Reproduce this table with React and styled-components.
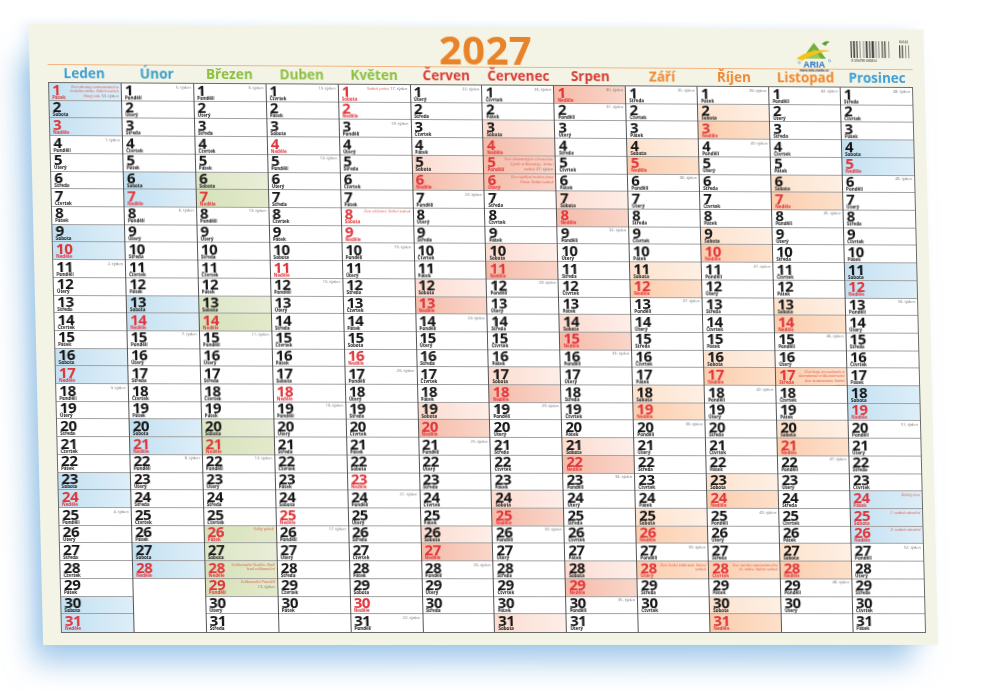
import React from 'react';
import styled, { createGlobalStyle } from 'styled-components';

const YEAR = 2027;
const DAY_NAMES = ['Neděle', 'Pondělí', 'Úterý', 'Středa', 'Čtvrtek', 'Pátek', 'Sobota'];

const PALETTES = {
  blue: { sat: 'linear-gradient(90deg,#c4e1f2,#ddeef8)', sun: 'linear-gradient(90deg,#c4e1f2,#ddeef8)' },
  green: { sat: 'linear-gradient(90deg,#dde6c6,#e9eed8)', sun: 'linear-gradient(90deg,#d6e1ba,#e3eacb)' },
  red: { sat: 'linear-gradient(90deg,#fcdcd0,#fdeee8)', sun: 'linear-gradient(90deg,#f5bba8,#f9d6ca)' },
  orange: { sat: 'linear-gradient(90deg,#fde2cd,#fef0e4)', sun: 'linear-gradient(90deg,#fbcdad,#fde0ca)' },
  none: { sat: null, sun: null },
};

const MONTHS = [
  ['Leden', '#3d9fd6', 'blue'],
  ['Únor', '#3a9fc9', 'blue'],
  ['Březen', '#8cbf3f', 'green'],
  ['Duben', '#8cbf3f', 'none'],
  ['Květen', '#8cbf3f', 'none'],
  ['Červen', '#d93a35', 'red'],
  ['Červenec', '#d93a35', 'red'],
  ['Srpen', '#d93a35', 'red'],
  ['Září', '#f0872e', 'orange'],
  ['Říjen', '#f0872e', 'orange'],
  ['Listopad', '#f0872e', 'orange'],
  ['Prosinec', '#3d9fd6', 'blue'],
];

const HOLIDAYS = {
  '0-1': 'Den obnovy samostatného českého státu, Státní svátek Nový rok,',
  '2-26': 'Velký pátek',
  '2-28': 'Velikonoční Neděle, Boží hod velikonoční',
  '2-29': 'Velikonoční Pondělí',
  '4-1': 'Svátek práce',
  '4-8': 'Den vítězství, Státní svátek',
  '6-5': 'Den slovanských věrozvěstů Cyrila a Metoděje, Státní svátek',
  '6-6': 'Den upálení mistra Jana Husa, Státní svátek',
  '8-28': 'Den české státnosti, Státní svátek',
  '9-28': 'Den vzniku samostatného čs. státu, Státní svátek',
  '10-17': 'Den boje za svobodu a demokracii a Mezinárodní den studentstva, Státní svátek',
  '11-24': 'Štědrý den',
  '11-25': '1. svátek vánoční',
  '11-26': '2. svátek vánoční',
};

function isoWeek(m, d) {
  const t = new Date(Date.UTC(YEAR, m, d));
  const dayNum = t.getUTCDay() || 7;
  t.setUTCDate(t.getUTCDate() + 4 - dayNum);
  const start = new Date(Date.UTC(t.getUTCFullYear(), 0, 1));
  return Math.ceil(((t - start) / 86400000 + 1) / 7);
}

const months = MONTHS.map(([name, color, palette], mi) => {
  const count = new Date(YEAR, mi + 1, 0).getDate();
  const days = [];
  for (let d = 1; d <= count; d++) {
    const dow = new Date(YEAR, mi, d).getDay();
    const note = HOLIDAYS[`${mi}-${d}`];
    const kind = dow === 0 || note ? 'sun' : dow === 6 ? 'sat' : null;
    days.push({
      d,
      name: DAY_NAMES[dow],
      red: dow === 0 || !!note,
      bg: kind ? PALETTES[palette][kind] : null,
      note,
      week: dow === 1 || d === 1 ? isoWeek(mi, d) : null,
    });
  }
  return { name, color, days, rest: 31 - count };
});

// the poster is photographed a little askew: map the flat grid onto the measured corners
function solve(A, b) {
  const n = b.length;
  const M = A.map((row, i) => [...row, b[i]]);
  for (let c = 0; c < n; c++) {
    let p = c;
    for (let r = c + 1; r < n; r++) if (Math.abs(M[r][c]) > Math.abs(M[p][c])) p = r;
    [M[c], M[p]] = [M[p], M[c]];
    for (let r = 0; r < n; r++) {
      if (r === c) continue;
      const f = M[r][c] / M[c][c];
      for (let k = c; k <= n; k++) M[r][k] -= f * M[c][k];
    }
  }
  return M.map((row, i) => row[n] / row[i]);
}

function warp(src, dst) {
  const A = [];
  const b = [];
  src.forEach(([x, y], i) => {
    const [u, v] = dst[i];
    A.push([x, y, 1, 0, 0, 0, -x * u, -y * u]);
    b.push(u);
    A.push([0, 0, 0, x, y, 1, -x * v, -y * v]);
    b.push(v);
  });
  const [a, bb, c, d, e, f, g, h] = solve(A, b);
  return `matrix3d(${[a, d, 0, g, bb, e, 0, h, 0, 0, 1, 0, c, f, 0, 1].join(',')})`;
}

const GX = 18;
const GY = 58;
const GW = 865;
const GH = 551;

const SHEET_WARP = warp(
  [[GX, GY], [GX + GW, GY], [GX, GY + GH], [GX + GW, GY + GH]],
  [[18, 58], [883, 63], [31, 609], [896, 609]]
);

const GlobalStyle = createGlobalStyle`
  html, body { margin: 0; padding: 0; background: #fff; }
  body {
    width: 999px;
    height: 691px;
    overflow: hidden;
    font-family: "Open Sans", "Noto Sans", sans-serif;
  }
`;

const Page = styled.div`
  width: 999px;
  height: 691px;
  padding: 24px 0 0 30px;
  box-sizing: border-box;
  overflow: hidden;
`;

const Sheet = styled.div`
  width: ${GX + GW + 12}px;
  box-sizing: border-box;
  padding: 6px 12px 12px ${GX}px;
  background: #f4f4e6;
  transform: ${SHEET_WARP};
  transform-origin: 0 0;
  box-shadow: -18px 26px 26px -8px rgba(110, 170, 222, 0.6), -6px 0 12px -2px rgba(150, 195, 230, 0.35);
`;

const TitleRow = styled.div`
  height: 34px;
  display: grid;
  grid-template-columns: 1fr auto 1fr;
  align-items: end;
`;

const Year = styled.div`
  grid-column: 2;
  font-size: 40px;
  line-height: 34px;
  font-weight: 700;
  color: #e98329;
  letter-spacing: 0.5px;
  margin: 0 0 5px 8px;
`;

const Brand = styled.div`
  grid-column: 3;
  justify-self: end;
  align-self: start;
  display: flex;
  align-items: flex-start;
  gap: 14px;
  margin-top: 4px;
`;

const MonthNames = styled.div`
  display: grid;
  grid-template-columns: repeat(12, 1fr);
  height: 18px;
  border-top: 1.5px solid #f2b47f;
  box-sizing: border-box;
`;

const MonthName = styled.div`
  text-align: center;
  font-size: 13.5px;
  line-height: 17px;
  font-weight: 700;
  color: ${(p) => p.$color};
`;

const Grid = styled.div`
  display: grid;
  grid-template-columns: repeat(12, minmax(0, 1fr));
  height: ${GH}px;
  width: ${GW}px;
  box-sizing: border-box;
  border: 1px solid #6a6a6a;
  background: #fff;
`;

const MonthCol = styled.div`
  display: grid;
  grid-template-rows: repeat(31, minmax(0, 1fr));
  border-right: 1px solid #555;
  min-width: 0;
  min-height: 0;
  &:last-child { border-right: none; }
`;

const Cell = styled.div`
  display: flex;
  justify-content: space-between;
  align-items: flex-start;
  padding: 0.5px 2px 0 3px;
  border-bottom: 1px solid #a2a2a2;
  background: ${(p) => p.$bg || '#fff'};
  min-height: 0;
  &:last-child { border-bottom: none; }
`;

const Filler = styled.div`
  grid-row: span ${(p) => p.$span};
  background: #fff;
`;

const DayBox = styled.div`
  display: flex;
  flex-direction: column;
  flex-shrink: 0;
  color: ${(p) => (p.$red ? '#e0343a' : '#151515')};
`;

const DayNum = styled.span`
  font-size: 15px;
  line-height: 11px;
  font-weight: 700;
  letter-spacing: -0.4px;
`;

const DayName = styled.span`
  font-size: 4.5px;
  line-height: 5px;
  font-weight: 700;
`;

const Note = styled.div`
  max-width: 55px;
  text-align: right;
  font-size: 4px;
  line-height: 4.6px;
  font-style: italic;
  color: #e05a47;
  margin-top: 1px;
`;

const Week = styled.span`
  font-style: normal;
  color: #6f6f6f;
  white-space: nowrap;
`;

function Logo() {
  return (
    <svg width="44" height="34" viewBox="0 0 44 34">
      <polygon points="9,20 21,4 33,20" fill="#72ad3c" />
      <polygon points="14,20 21,10 28,20" fill="#9cc85a" />
      <path d="M3 20 Q18 9 38 12 Q24 13 9 22 Z" fill="#f3c31c" />
      <path d="M29 5 Q33 1 37 3 Q34 4 33 7 Q31 6 29 5 Z" fill="#4f9a32" />
      <text x="21" y="29" textAnchor="middle" fontSize="9" fontWeight="700" fill="#1e6fc1" fontFamily="Liberation Sans, sans-serif">ARIA</text>
      <circle cx="6" cy="24" r="1.2" fill="none" stroke="#1e6fc1" strokeWidth="0.4" />
      <circle cx="36.5" cy="22" r="1.2" fill="none" stroke="#1e6fc1" strokeWidth="0.4" />
      <text x="21" y="33.5" textAnchor="middle" fontSize="3.4" fontWeight="700" fill="#333" fontFamily="Liberation Sans, sans-serif">www.aria-vardo.cz</text>
    </svg>
  );
}

const BARS = [1, 0.5, 1.5, 0.5, 1, 1, 0.5, 2, 0.5, 1, 1.5, 0.5, 1, 0.5, 2, 1, 0.5, 1, 0.5, 1.5, 1, 0.5, 1, 2, 0.5, 1];

function Barcode() {
  let x = 0;
  const bars = [];
  BARS.forEach((w, i) => {
    if (i % 2 === 0) bars.push(<rect key={i} x={x} y="2" width={w} height="17" fill="#222" />);
    x += w + 0.6;
  });
  const small = [];
  let sx = 49;
  [1, 0.5, 1, 1.5, 0.5, 1, 0.5, 1].forEach((w, i) => {
    if (i % 2 === 0) small.push(<rect key={i} x={sx} y="6" width={w} height="13" fill="#222" />);
    sx += w + 0.6;
  });
  return (
    <svg width="62" height="24" viewBox="0 0 62 24">
      {bars}
      {small}
      <text x="49" y="4.5" fontSize="3.4" fill="#333" fontFamily="Liberation Sans, sans-serif">80561</text>
      <text x="0.5" y="23" fontSize="3.3" fill="#333" fontFamily="Liberation Sans, sans-serif">8 590798 083454</text>
    </svg>
  );
}

function Day({ day }) {
  return (
    <Cell $bg={day.bg}>
      <DayBox $red={day.red}>
        <DayNum>{day.d}</DayNum>
        <DayName>{day.name}</DayName>
      </DayBox>
      {(day.note || day.week) && (
        <Note>
          {day.note}
          {day.note && day.week ? ' ' : null}
          {day.week && <Week>{day.week}. týden</Week>}
        </Note>
      )}
    </Cell>
  );
}

export default function App() {
  return (
    <Page>
      <GlobalStyle />
      <Sheet>
        <TitleRow>
          <Year>{YEAR}</Year>
          <Brand>
            <Logo />
            <Barcode />
          </Brand>
        </TitleRow>
        <MonthNames>
          {months.map((m) => (
            <MonthName key={m.name} $color={m.color}>{m.name}</MonthName>
          ))}
        </MonthNames>
        <Grid>
          {months.map((m) => (
            <MonthCol key={m.name}>
              {m.days.map((day) => (
                <Day key={day.d} day={day} />
              ))}
              {m.rest > 0 && <Filler $span={m.rest} />}
            </MonthCol>
          ))}
        </Grid>
      </Sheet>
    </Page>
  );
}
